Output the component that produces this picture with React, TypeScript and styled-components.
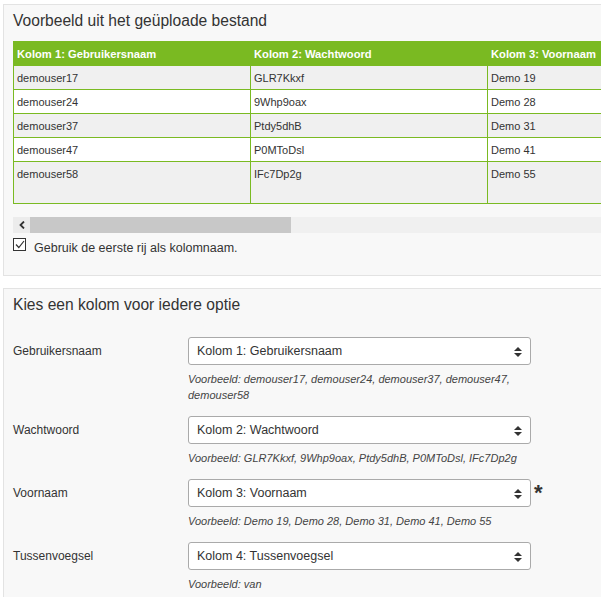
import React from 'react'
import styled, { createGlobalStyle } from 'styled-components'

const GlobalStyle = createGlobalStyle`
  html, body {
    margin: 0;
    padding: 0;
    background: #fff;
    overflow: hidden;
  }
  body {
    font-family: "Liberation Sans", Arial, sans-serif;
    color: #333;
  }
`

const Page = styled.div`
  width: 680px;
  padding: 4px 0 0 3px;
`

const Panel = styled.section`
  background: #f8f8f8;
  border: 1px solid #e3e3e3;
  padding: 0 0 19px 9px;
  margin-bottom: 12px;
`

const PanelTitle = styled.h2`
  margin: 0;
  font-size: 15.6px;
  font-weight: normal;
  line-height: 20px;
  padding: 6px 0 10px;
  color: #333;
`

const TableScroll = styled.div`
  overflow: hidden;
  width: 660px;
`

const Table = styled.table`
  border-collapse: collapse;
  table-layout: fixed;
  width: 1185px;
  font-size: 11px;
`

const HeadCell = styled.th`
  background: #7aba22;
  color: #fff;
  font-weight: bold;
  font-size: 11.2px;
  text-align: left;
  height: 24px;
  padding: 0 3px;
  border: 1px solid #7aba22;
  width: 237px;
  box-sizing: border-box;
`

const Row = styled.tr<{ $odd: boolean; $tall?: boolean }>`
  background: ${(p) => (p.$odd ? '#f0f0f0' : '#fff')};
  height: ${(p) => (p.$tall ? '42px' : '24px')};
`

const Cell = styled.td`
  border: 1px solid #7aba22;
  padding: 6px 3px 0;
  vertical-align: top;
  color: #333;
  line-height: 13px;
`

const Scrollbar = styled.div`
  display: flex;
  height: 16px;
  margin-top: 13px;
  width: 660px;
  background: #f0f0f0;
`

const ScrollArrow = styled.div`
  width: 17px;
  display: flex;
  align-items: center;
  justify-content: center;
  background: #ececec;
`

const ScrollThumb = styled.div`
  width: 261px;
  background: #c8c8c8;
`

const CheckRow = styled.label`
  display: flex;
  align-items: flex-start;
  gap: 8px;
  margin-top: 5px;
  font-size: 12.5px;
  color: #333;
`

const CheckBox = styled.span`
  width: 11px;
  height: 11px;
  border: 1px solid #333;
  background: #fff;
  display: flex;
  align-items: center;
  justify-content: center;
`

const CheckText = styled.span`
  padding-top: 2px;
  line-height: 16px;
`

const FormPanel = styled(Panel)`
  padding-bottom: 40px;
`

const FormTitle = styled(PanelTitle)`
  padding: 6px 0 22px;
`

const Group = styled.div`
  display: grid;
  grid-template-columns: 175px 343px 20px;
  align-items: start;
  margin-bottom: 13px;
`

const Label = styled.div`
  font-size: 12px;
  line-height: 28px;
  color: #333;
`

const SelectBox = styled.div`
  position: relative;
  height: 28px;
  box-sizing: border-box;
  border: 1px solid #aaa;
  border-radius: 3px;
  background: #fff;
  display: flex;
  align-items: center;
  padding: 0 8px;
  font-size: 12.5px;
  color: #333;
`

const SortIcon = styled.svg`
  position: absolute;
  right: 8px;
  top: 9px;
`

const Help = styled.div`
  grid-column: 2;
  margin-top: 6px;
  font-size: 11px;
  line-height: 16px;
  font-style: italic;
  color: #444;
`

const Required = styled.span`
  font-size: 22px;
  font-weight: bold;
  color: #333;
  padding-left: 3px;
  line-height: 28px;
`

const headers = [
  'Kolom 1: Gebruikersnaam',
  'Kolom 2: Wachtwoord',
  'Kolom 3: Voornaam',
  'Kolom 4: Tussenvoegsel',
  'Kolom 5: Achternaam',
]

const rows = [
  ['demouser17', 'GLR7Kkxf', 'Demo 19', '', 'Gebruiker'],
  ['demouser24', '9Whp9oax', 'Demo 28', '', 'Gebruiker'],
  ['demouser37', 'Ptdy5dhB', 'Demo 31', '', 'Gebruiker'],
  ['demouser47', 'P0MToDsl', 'Demo 41', '', 'Gebruiker'],
  ['demouser58', 'IFc7Dp2g', 'Demo 55', 'van', 'Gebruiker'],
]

const options = [
  {
    label: 'Gebruikersnaam',
    value: 'Kolom 1: Gebruikersnaam',
    example: 'demouser17, demouser24, demouser37, demouser47, demouser58',
  },
  {
    label: 'Wachtwoord',
    value: 'Kolom 2: Wachtwoord',
    example: 'GLR7Kkxf, 9Whp9oax, Ptdy5dhB, P0MToDsl, IFc7Dp2g',
  },
  {
    label: 'Voornaam',
    value: 'Kolom 3: Voornaam',
    example: 'Demo 19, Demo 28, Demo 31, Demo 41, Demo 55',
    required: true,
  },
  {
    label: 'Tussenvoegsel',
    value: 'Kolom 4: Tussenvoegsel',
    example: 'van',
  },
]

function Sort() {
  return (
    <SortIcon width="8" height="10" viewBox="0 0 8 10">
      <path d="M4 0 L8 4 L0 4 Z" fill="#333" />
      <path d="M0 6 L8 6 L4 10 Z" fill="#333" />
    </SortIcon>
  )
}

export default function App() {
  return (
    <>
      <GlobalStyle />
      <Page>
        <Panel>
          <PanelTitle>Voorbeeld uit het geüploade bestand</PanelTitle>
          <TableScroll>
            <Table>
              <thead>
                <tr>
                  {headers.map((h) => (
                    <HeadCell key={h}>{h}</HeadCell>
                  ))}
                </tr>
              </thead>
              <tbody>
                {rows.map((r, i) => (
                  <Row key={i} $odd={i % 2 === 0} $tall={i === rows.length - 1}>
                    {r.map((c, j) => (
                      <Cell key={j}>{c}</Cell>
                    ))}
                  </Row>
                ))}
              </tbody>
            </Table>
          </TableScroll>
          <Scrollbar>
            <ScrollArrow>
              <svg width="6" height="8" viewBox="0 0 6 8">
                <path d="M5 0.5 L1.5 4 L5 7.5" stroke="#333" strokeWidth="1.8" fill="none" />
              </svg>
            </ScrollArrow>
            <ScrollThumb />
          </Scrollbar>
          <CheckRow>
            <CheckBox>
              <svg width="10" height="9" viewBox="0 0 10 9">
                <path d="M1 4.5 L3.8 7.5 L9 1" stroke="#333" strokeWidth="1.2" fill="none" />
              </svg>
            </CheckBox>
            <CheckText>Gebruik de eerste rij als kolomnaam.</CheckText>
          </CheckRow>
        </Panel>
        <FormPanel>
          <FormTitle>Kies een kolom voor iedere optie</FormTitle>
          {options.map((o) => (
            <Group key={o.label}>
              <Label>{o.label}</Label>
              <SelectBox>
                {o.value}
                <Sort />
              </SelectBox>
              {o.required ? <Required>*</Required> : <span />}
              <Help>Voorbeeld: {o.example}</Help>
            </Group>
          ))}
        </FormPanel>
      </Page>
    </>
  )
}
